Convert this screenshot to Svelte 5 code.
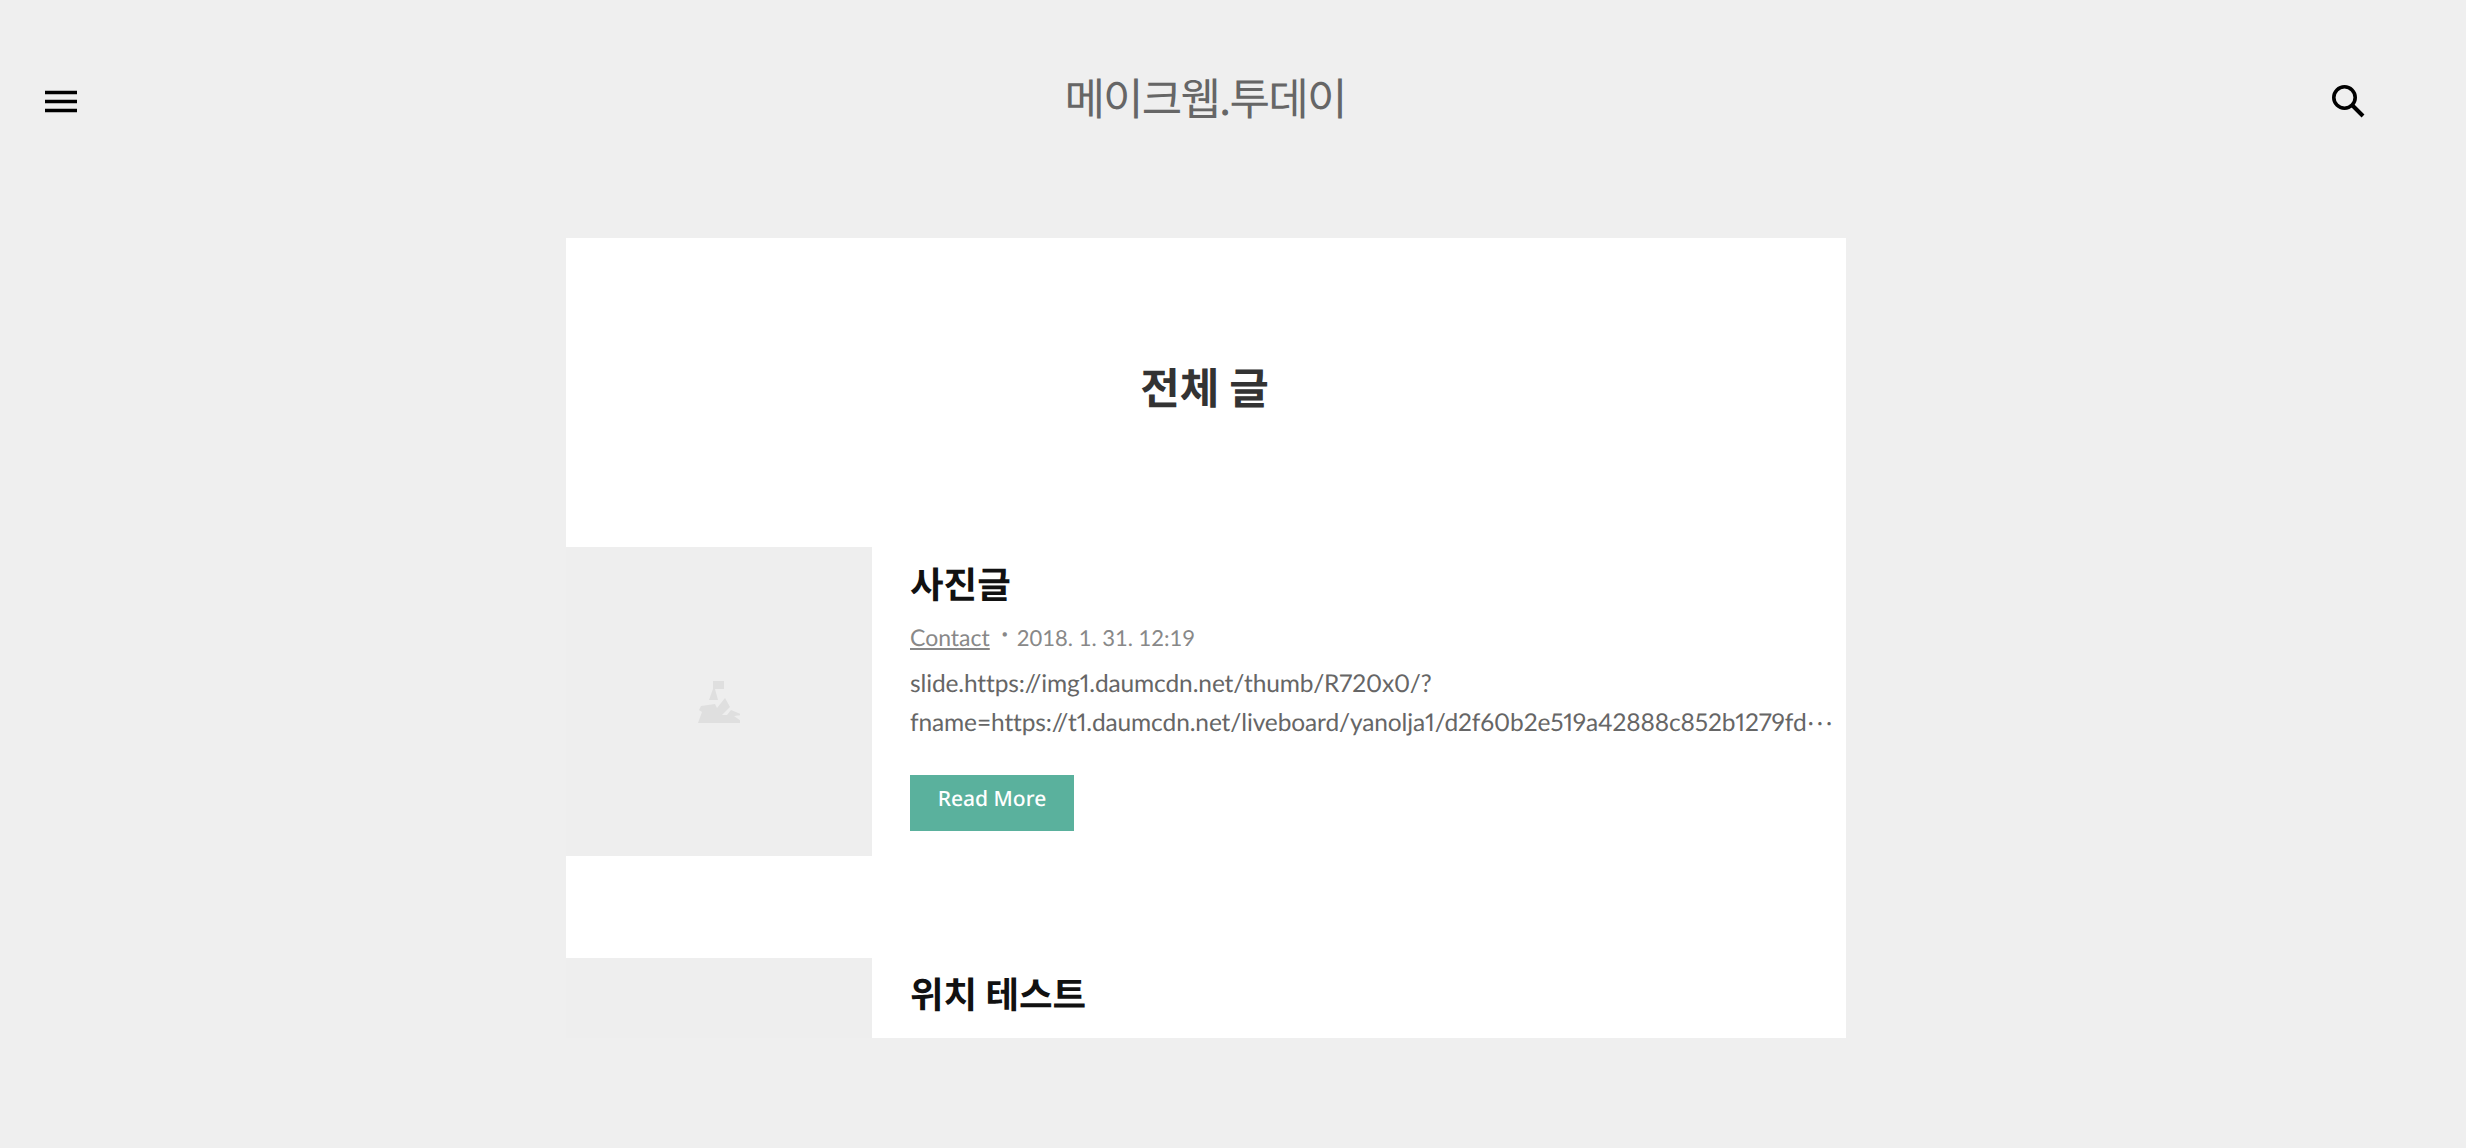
<script lang="ts">
	const posts = [
		{
			title: '사진글',
			category: 'Contact',
			date: '2018. 1. 31. 12:19',
			excerpt:
				'slide.https://img1.daumcdn.net/thumb/R720x0/?fname=https://t1.daumcdn.net/liveboard/yanolja1/d2f60b2e519a42888c852b1279fd'
		},
		{
			title: '위치 테스트',
			category: 'Contact',
			date: '2018. 1. 31. 12:18',
			excerpt: '위치 테스트 글입니다'
		}
	];
</script>

<div class="page">
	<header class="header">
		<button class="icon-btn" aria-label="메뉴">
			<svg width="34" height="24" viewBox="0 0 34 24" aria-hidden="true">
				<path d="M1 2.500h32M1 11.500h32M1 20.500h32" stroke="#000" stroke-width="3.400" fill="none" />
			</svg>
		</button>
		<h1 class="logo">메이크웹.투데이</h1>
		<button class="icon-btn" aria-label="검색">
			<svg width="34" height="34" viewBox="0 0 34 34" aria-hidden="true">
				<circle cx="12.500" cy="12.500" r="10.700" stroke="#000" stroke-width="3.600" fill="none" />
				<path d="M20 20 L31 31" stroke="#000" stroke-width="4" fill="none" />
			</svg>
		</button>
	</header>

	<main class="card">
		<h2 class="heading">전체 글</h2>
		{#each posts as post}
			<article class="post">
				<div class="thumb">
					<svg width="42" height="42" viewBox="0 0 42 42" fill="#dfdfdf" aria-hidden="true">
						<path d="M15 0h11v8h-9l3 11h-9l4-11z" />
						<path d="M0 42l4-11-3-2 2-4 14-2 2 4 8-10 5 9-8 8h5l4-5 12 5-9 1 10 7z" />
					</svg>
				</div>
				<div class="body">
					<h3 class="title">{post.title}</h3>
					<p class="meta"><span class="category">{post.category}</span><span class="dot">・</span>{post.date}</p>
					<p class="excerpt">{post.excerpt}</p>
					<span class="more">Read More</span>
				</div>
			</article>
		{/each}
	</main>
</div>

<style>
	:global(body) {
		margin: 0;
		background: #efefef;
		font-family: Lato, 'Noto Sans CJK KR', sans-serif;
		text-rendering: geometricPrecision;
	}

	.page {
		height: 1148px;
		overflow: hidden;
	}

	.header {
		height: 238px;
		box-sizing: border-box;
		padding: 57px 100px 0 44px;
		display: flex;
		justify-content: space-between;
		align-items: flex-start;
	}

	.icon-btn {
		border: 0;
		padding: 0;
		margin-top: 28px;
		background: none;
		height: 34px;
	}

	.icon-btn svg {
		display: block;
	}

	.logo {
		margin: 0;
		font-family: 'Noto Sans CJK KR', sans-serif;
		font-size: 44px;
		line-height: 78px;
		font-weight: 400;
		color: #666;
		letter-spacing: -1.800px;
	}

	.card {
		width: 1280px;
		height: 800px;
		margin: 0 0 0 566px;
		background: #fff;
		overflow: hidden;
	}

	.heading {
		margin: 0;
		height: 309px;
		box-sizing: border-box;
		padding: 117px 3px 0 0;
		text-align: center;
		font-family: 'Noto Sans CJK KR', sans-serif;
		font-size: 43px;
		line-height: 62px;
		font-weight: 700;
		color: #333;
	}

	.post {
		display: flex;
		height: 309px;
		margin-bottom: 102px;
	}

	.post + .post .body {
		padding-top: 7px;
	}

	.thumb {
		width: 306px;
		flex-shrink: 0;
		background: #eeeeee;
		display: flex;
		align-items: center;
		justify-content: center;
	}

	.body {
		flex: 1;
		min-width: 0;
		padding: 8px 4px 0 38px;
	}

	.title {
		margin: 0;
		font-family: 'Noto Sans CJK KR', sans-serif;
		font-size: 36.500px;
		line-height: 56px;
		font-weight: 700;
		color: #111;
	}

	.meta {
		margin: 10px 0 0;
		font-size: 22px;
		line-height: 32px;
		color: #888;
		font-weight: 400;
	}

	.category {
		font-size: 23px;
		text-decoration: underline;
	}

	.dot {
		display: inline-block;
		width: 20px;
		margin: 0 2px 0 5px;
		font-size: 20px;
		line-height: 1;
		vertical-align: 4px;
	}

	.excerpt {
		margin: 11px 0 0;
		font-size: 24.500px;
		line-height: 38px;
		font-weight: 400;
		color: #666;
		letter-spacing: -0.120px;
		font-variant-numeric: proportional-nums;
		overflow-wrap: anywhere;
	}

	.excerpt::after {
		content: '⋯';
		font-family: 'Noto Sans CJK KR', sans-serif;
		position: relative;
		top: -6px;
	}

	.more {
		display: block;
		width: 164px;
		height: 56px;
		margin-top: 33px;
		background: #5ab19d;
		color: #fff;
		font-family: 'Noto Sans', sans-serif;
		font-size: 21px;
		font-weight: 500;
		line-height: 49px;
		text-align: center;
	}
</style>
